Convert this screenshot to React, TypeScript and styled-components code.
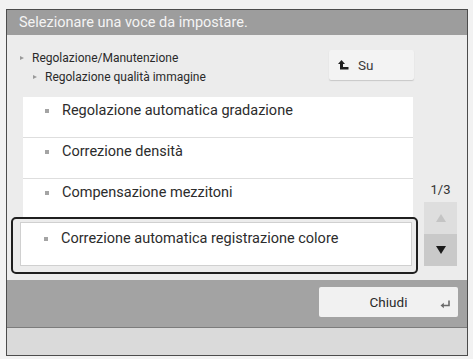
import React from "react";
import styled, { createGlobalStyle } from "styled-components";

const GlobalStyle = createGlobalStyle`
  html, body {
    margin: 0;
    padding: 0;
    background-color: #f2f2f2;
  }
  body {
    font-family: Roboto, "Liberation Sans", sans-serif;
  }
`;

const rows = [
  "Regolazione automatica gradazione",
  "Correzione densità",
  "Compensazione mezzitoni",
];

const App = () => {
  return (
    <>
      <GlobalStyle />
      <Frame>
        <TitleBar>Selezionare una voce da impostare.</TitleBar>
        <Content>
          <TopRow>
            <Crumbs>
              <Crumb>
                <Arrow />
                Regolazione/Manutenzione
              </Crumb>
              <Crumb indent>
                <Arrow />
                Regolazione qualità immagine
              </Crumb>
            </Crumbs>
            <SuBtn>
              <svg width="11" height="10" viewBox="0 0 11 10">
                <path d="M3.5 0 L0 4 H2 V9.5 H10.5 V7 H5 V4 H7 Z" fill="#1e1e1e" />
              </svg>
              <span>Su</span>
            </SuBtn>
          </TopRow>
          <ListArea>
            <List>
              {rows.map((r) => (
                <Row key={r}>
                  <Bullet />
                  {r}
                </Row>
              ))}
              <Selected>
                <SelectedInner>
                  <Bullet />
                  Correzione automatica registrazione colore
                </SelectedInner>
              </Selected>
            </List>
            <Pager>
              <PageNum>1/3</PageNum>
              <PageBtn disabled>
                <Tri up color="#c4c4c4" />
              </PageBtn>
              <PageBtn>
                <Tri color="#1a1a1a" />
              </PageBtn>
            </Pager>
          </ListArea>
        </Content>
        <Footer>
          <CloseBtn>
            Chiudi
            <ReturnIcon width="11" height="9" viewBox="0 0 11 9">
              <path d="M9 0.5 V5.5 H3" stroke="#6a6a6a" strokeWidth="1.6" fill="none" />
              <path d="M0.5 5.5 L3.8 2.8 V8.2 Z" fill="#6a6a6a" />
            </ReturnIcon>
          </CloseBtn>
        </Footer>
        <BottomStrip />
      </Frame>
    </>
  );
};

interface TriProps {
  up?: boolean;
  color: string;
}

interface CrumbProps {
  indent?: boolean;
}

const Frame = styled.div`
  box-sizing: border-box;
  margin: 9px 0 0 6px;
  width: 462px;
  height: 347px;
  border: 1.5px solid #4c4c4c;
  background-color: #ececec;
  display: flex;
  flex-direction: column;
`;

const TitleBar = styled.div`
  height: 25px;
  background-color: #9d9d9d;
  color: #f4f4f4;
  font-size: 14.5px;
  line-height: 25px;
  padding-left: 12px;
`;

const Content = styled.div`
  height: 245px;
  display: flex;
  flex-direction: column;
`;

const TopRow = styled.div`
  display: flex;
  justify-content: space-between;
  padding: 15px 53px 0 13px;
  height: 47px;
`;

const Crumbs = styled.div`
  display: flex;
  flex-direction: column;
  gap: 5px;
  padding-top: 1px;
`;

const Crumb = styled.div<CrumbProps>`
  display: flex;
  align-items: center;
  gap: 8px;
  font-size: 12px;
  color: #2a2a2a;
  padding-left: ${(p) => (p.indent ? "13px" : "0")};
`;

const Arrow = styled.span`
  width: 0;
  height: 0;
  border-top: 2.5px solid transparent;
  border-bottom: 2.5px solid transparent;
  border-left: 4px solid #9a9a9a;
`;

const SuBtn = styled.div`
  box-sizing: border-box;
  width: 85px;
  height: 30px;
  background-color: #f3f3f3;
  border-radius: 2px;
  box-shadow: 0 1px 1px #c8c8c8;
  display: flex;
  align-items: center;
  gap: 9px;
  padding-left: 9px;
  font-size: 13.5px;
  color: #3a3a3a;
`;

const ListArea = styled.div`
  display: flex;
  align-items: flex-end;
  gap: 6px;
  padding-left: 4px;
`;

const List = styled.div`
  width: 407px;
  display: flex;
  flex-direction: column;
  align-items: flex-end;
`;

const Row = styled.div`
  box-sizing: border-box;
  width: 390px;
  margin-right: 5px;
  height: 41px;
  background-color: #ffffff;
  border-bottom: 1.5px solid #dedede;
  display: flex;
  align-items: flex-start;
  padding: 5px 0 0 22px;
  font-size: 14.5px;
  color: #2c2c2c;
`;

const Bullet = styled.span`
  width: 4px;
  height: 4px;
  background-color: #a4a4a4;
  margin: 7px 13px 0 0;
  flex-shrink: 0;
`;

const Selected = styled.div`
  box-sizing: border-box;
  width: 407px;
  height: 57px;
  margin-top: -3px;
  border: 2px solid #1f1f1f;
  border-radius: 5px;
  padding: 3px 4px 6px 7px;
  background-color: #ececec;
`;

const SelectedInner = styled(Row)`
  width: 100%;
  height: 100%;
  margin-right: 0;
  border: 1px solid #d0d0d0;
  padding: 7px 0 0 23px;
`;

const Pager = styled.div`
  display: flex;
  flex-direction: column;
  align-items: center;
  width: 33px;
  padding-bottom: 8px;
`;

const PageNum = styled.div`
  font-size: 13px;
  color: #333;
  margin-bottom: 5px;
`;

const PageBtn = styled.div<{ disabled?: boolean }>`
  width: 33px;
  height: 32px;
  display: flex;
  align-items: center;
  justify-content: center;
  background-color: ${(p) => (p.disabled ? "#dedede" : "#c9c9c9")};
`;

const Tri = styled.span<TriProps>`
  width: 0;
  height: 0;
  border-left: 5px solid transparent;
  border-right: 5px solid transparent;
  ${(p) =>
    p.up
      ? `border-bottom: 8px solid ${p.color};`
      : `border-top: 8px solid ${p.color};`}
`;

const Footer = styled.div`
  height: 48px;
  background-color: #a3a3a3;
  border-bottom: 1.5px solid #7c7c7c;
  display: flex;
  justify-content: flex-end;
  align-items: flex-start;
  padding: 7px 9px 0 0;
  box-sizing: border-box;
`;

const CloseBtn = styled.div`
  position: relative;
  width: 139px;
  height: 30px;
  background-color: #f1f1f1;
  border-radius: 2px;
  display: flex;
  align-items: center;
  justify-content: center;
  font-size: 13.5px;
  color: #2a2a2a;
`;

const ReturnIcon = styled.svg`
  position: absolute;
  right: 7px;
  bottom: 8px;
`;

const BottomStrip = styled.div`
  flex: 1;
  background-color: #dadada;
`;

export default App;
